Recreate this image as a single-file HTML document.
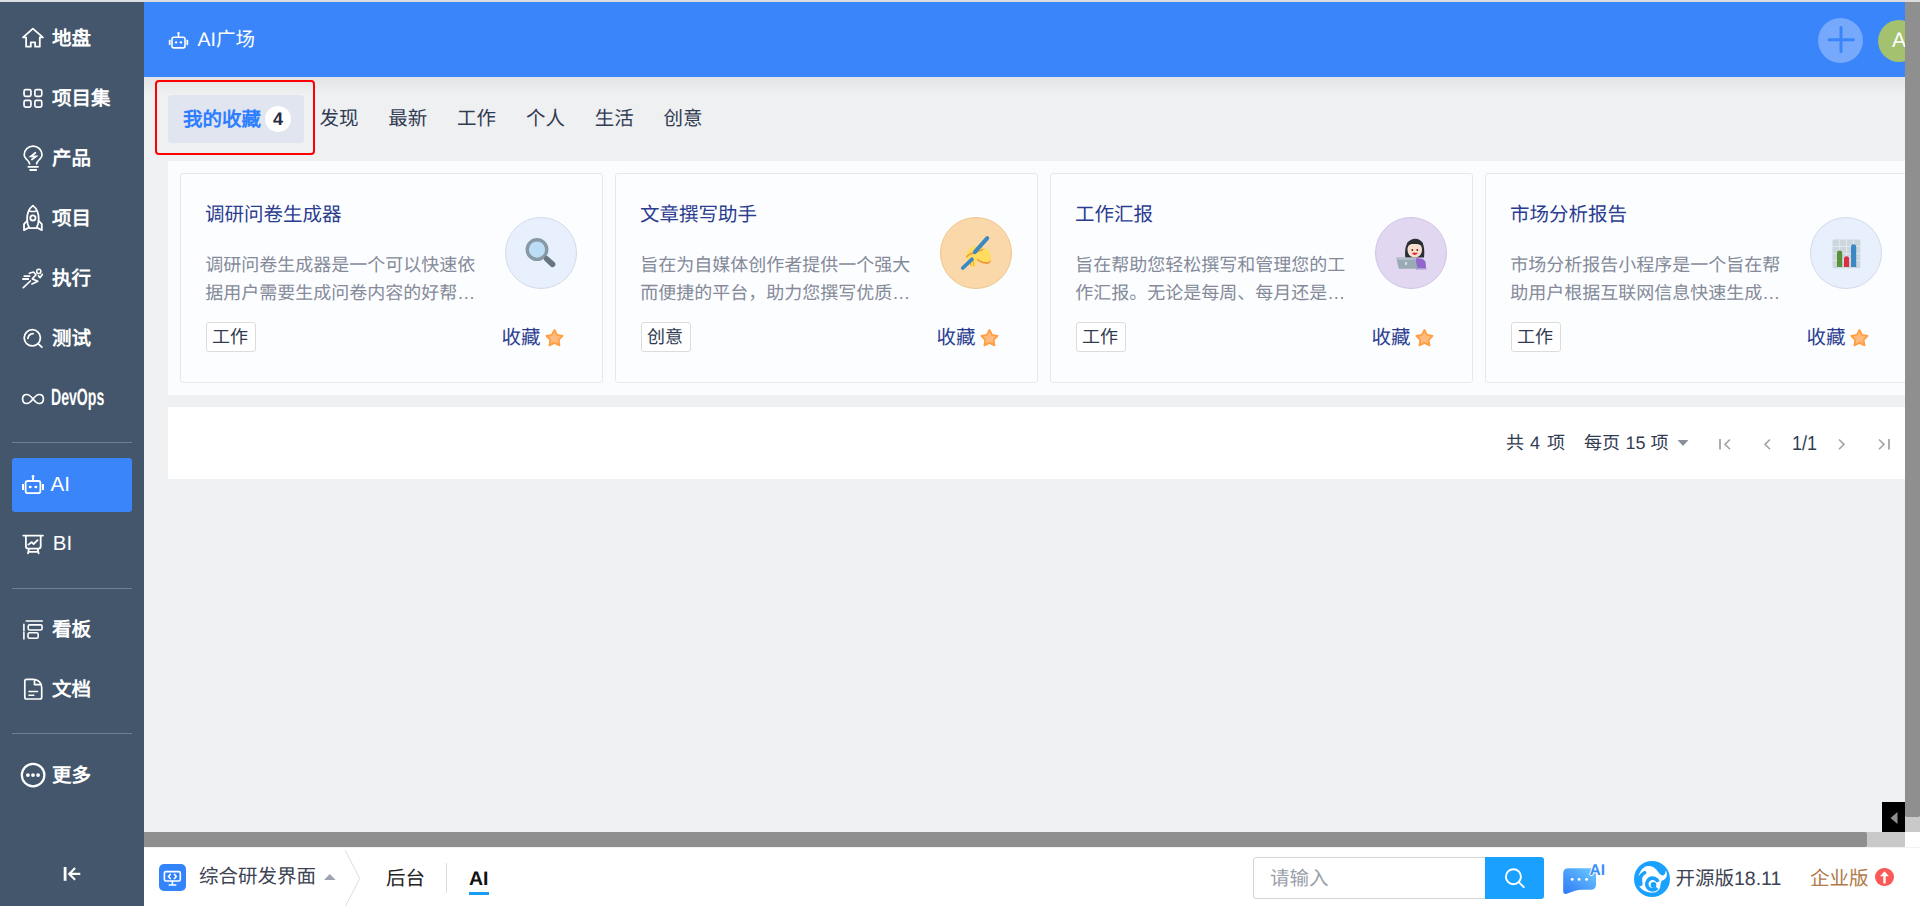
<!DOCTYPE html>
<html lang="zh-CN"><head><meta charset="utf-8">
<style>
*{box-sizing:border-box;margin:0;padding:0}
html,body{width:1920px;height:906px;overflow:hidden;text-rendering:geometricPrecision;background:#eff0f2;font-family:"Liberation Sans",sans-serif;color:#313c52}
.abs{position:absolute}
svg{position:absolute;overflow:visible}
#topstrip{left:0;top:0;width:1920px;height:2px;background:#dcdde1}
#side{left:0;top:2px;width:144px;height:904px;background:#43566b}
.nt{position:absolute;left:52px;color:#fff;font-size:19.5px;font-weight:600;line-height:24px;white-space:nowrap}
.sep{position:absolute;left:12px;width:120px;height:1px;background:#6f7f91}
#header{left:144px;top:2px;width:1761px;height:75px;background:#3a85f9}
#tabs{left:144px;top:77px;width:1761px;height:84px;background:#eff0f2}
.tab{position:absolute;top:107px;font-size:19.5px;line-height:24px;color:#313c52;white-space:nowrap}
#cards{left:168px;top:161px;width:1737px;height:234px;background:#fbfcfe;overflow:hidden}
.card{position:absolute;top:12px;width:423px;height:210px;border:1px solid #e7e8ea;border-radius:3px;background:#fcfdff}
.ttl{position:absolute;left:24px;top:28.5px;font-size:19.5px;color:#2a3c8f;line-height:24px;white-space:nowrap}
.desc{position:absolute;left:24.2px;top:77px;font-size:18px;line-height:28px;color:#848a99;white-space:nowrap}
.ico{position:absolute;left:324px;top:43px;width:72px;height:72px;border-radius:50%;border:1.5px solid #d3d9e8;background:#e9f0fd}
.tag{position:absolute;left:25px;top:148px;width:50px;height:30px;padding-right:2px;border:1px solid #dcdcdc;border-radius:3px;font-size:18px;line-height:28px;text-align:center;color:#313c52;background:#fff}
.fav{position:absolute;left:320.5px;top:152px;font-size:19.5px;line-height:24px;color:#2a3c8f;white-space:nowrap}
#pager{left:168px;top:407px;width:1737px;height:72px;background:#fff}
.pg{position:absolute;top:431px;font-size:18px;line-height:24px;color:#313c52;white-space:nowrap}
#vscroll{left:1905px;top:2px;width:15px;height:830px;background:#c9c9c9}
#hscroll{left:144px;top:832px;width:1761px;height:15px;background:#c9c9c9}
#bottom{left:144px;top:847px;width:1776px;height:59px;background:#fff;border-top:1px solid #f0f2f6}
.bt{position:absolute;font-size:19.5px;line-height:24px;white-space:nowrap}
</style></head><body>
<div class="abs" id="topstrip"></div>
<div class="abs" id="side"></div>
<!-- sidebar items -->
<svg style="left:0;top:0" width="144" height="906" viewBox="0 0 144 906" fill="none" stroke="#fff" stroke-width="1.7" stroke-linejoin="round" stroke-linecap="round">
  <!-- house -->
  <path d="M23 37.4 L32.9 28.6 L42.9 37.4 H39.8 V46.7 H35.1 V42.3 H30.8 V46.7 H26.1 V37.4 Z" stroke-width="1.8"/>
  <!-- grid -->
  <rect x="24.05" y="89.6" width="6.9" height="6.7" rx="1.6"/><rect x="34.85" y="89.6" width="6.9" height="6.7" rx="1.6"/>
  <rect x="24.05" y="100.4" width="6.9" height="6.8" rx="1.6"/><rect x="34.85" y="100.4" width="6.9" height="6.8" rx="1.6"/>
  <!-- bulb -->
  <path d="M29.6 163.8 C29.3 161.8 27.8 160.5 26.4 159.1 C24.8 157.5 24.2 155.8 24.2 155 A8.9 8.9 0 0 1 42 155 C42 155.8 41.4 157.5 39.8 159.1 C38.4 160.5 36.9 161.8 36.6 163.8"/>
  <path d="M28.3 166.8 H38 M30.2 170 H36.2" stroke-width="1.8"/>
  <path d="M35.4 152.8 L31 156.4 H36 L31.9 159.5" stroke-width="1.8" stroke-linejoin="miter"/>
  <!-- rocket -->
  <path d="M32.9 205.6 C29 208.5 27.1 213 27.1 219 C27.1 222.5 28 226 29.5 228.2 H36.3 C37.8 226 38.7 222.5 38.7 219 C38.7 213 36.8 208.5 32.9 205.6 Z" stroke-width="1.8"/>
  <circle cx="32.9" cy="217.9" r="2.6" stroke-width="1.8"/>
  <path d="M29.7 210.9 Q32.9 212 36.1 210.9" stroke-width="1.6"/>
  <path d="M26.9 221 L24 224.2 V230.2 L28.7 227.6 M38.9 221 L41.8 224.2 V230.2 L37.1 227.6" stroke-width="1.8"/>
  <!-- run -->
  <circle cx="38.8" cy="271.4" r="2.1" stroke-width="1.6"/>
  <path d="M23.3 287.6 L30.4 281 M29.3 273.3 L33.5 272 L36 274.8 L32.3 278.9 L37.8 281.2 L32 284 M38.4 275.9 L40.1 277.6 L42.3 274.4" stroke-width="1.7"/>
  <path d="M23.6 276.1 H30.3 M22.3 279 H29" stroke-width="1.8" stroke-linecap="butt"/>
  <!-- test -->
  <circle cx="32.3" cy="337.8" r="8.1" stroke-width="1.8"/>
  <path d="M38.3 343.8 L41.9 347.2" stroke-width="1.8"/>
  <path d="M27.9 338.3 C28.3 335.8 30.5 333.8 33.1 333.6" stroke-width="1.8"/>
  <!-- infinity -->
  <path d="M33 399 C30.5 395.8 28.8 394.5 26.8 394.5 C24.2 394.5 22.6 396.5 22.6 399 C22.6 401.5 24.2 403.5 26.8 403.5 C28.8 403.5 30.5 402.2 33 399 C35.5 395.8 37.2 394.5 39.2 394.5 C41.8 394.5 43.4 396.5 43.4 399 C43.4 401.5 41.8 403.5 39.2 403.5 C37.2 403.5 35.5 402.2 33 399 Z"/>
  <!-- BI board -->
  <path d="M23.3 535.6 H43 M25.9 535.6 V546.3 Q25.9 548.6 28.2 548.6 H38.4 Q40.7 548.6 40.7 546.3 V535.6 M28.9 549 L28 553.4 M37.7 549 L38.6 553.4 M28.4 551.8 H38.2" stroke-width="1.8"/>
  <path d="M28.4 544.6 L31.6 542.2 L33.6 544 L37.6 540.2" stroke-width="1.8"/>
  <!-- kanban -->
  <path d="M26.3 621 H42.3 M23.9 624.3 V630.7 M23.9 632.3 V639" stroke-width="1.6"/><rect x="28.2" y="624.9" width="13.9" height="5.1" rx="1.6" stroke-width="1.6"/><rect x="28" y="632.8" width="10.2" height="5.5" rx="1.6" stroke-width="1.6"/>
  <!-- doc -->
  <path d="M26.5 679.3 H33.5 C38 679.3 41.7 683 41.7 687.5 V697.3 Q41.7 699 40 699 H26.5 Q24.8 699 24.8 697.3 V681 Q24.8 679.3 26.5 679.3 Z M34.5 679.8 V684.6 H41.2"/>
  <path d="M29 691.5 H37.5 M29 695.2 H33.8" stroke-width="1.6"/>
  <!-- more -->
  <circle cx="33.1" cy="775.1" r="11.3" stroke-width="2.2"/>
  <circle cx="27.9" cy="775.1" r="1.9" fill="#fff" stroke="none"/><circle cx="33" cy="775.1" r="1.9" fill="#fff" stroke="none"/><circle cx="38.1" cy="775.1" r="1.9" fill="#fff" stroke="none"/>
  <!-- collapse -->
  <path d="M65.1 867 V880.8" stroke-width="2.8" stroke-linecap="butt"/>
  <path d="M80.3 873.9 H69 M75.1 868 L69.2 873.9 L75.1 879.8" stroke-width="2.1" stroke-linecap="butt" stroke-linejoin="miter"/>
</svg>
<div class="nt" style="top:27px">地盘</div>
<div class="nt" style="top:87px">项目集</div>
<div class="nt" style="top:147px">产品</div>
<div class="nt" style="top:207px">项目</div>
<div class="nt" style="top:267px">执行</div>
<div class="nt" style="top:327px">测试</div>
<div class="nt" style="top:382.7px;left:51px;transform:scaleX(0.6);transform-origin:left;font-size:23.5px;line-height:28px">DevOps</div>
<div class="sep" style="top:442px"></div>
<div class="abs" style="left:12px;top:458px;width:120px;height:54px;background:#3a85f9;border-radius:3px"></div>
<svg style="left:0;top:0" width="144" height="906" fill="none" stroke="#fff" stroke-width="1.8" stroke-linejoin="round" stroke-linecap="round"><g transform="translate(33,487)"><rect x="-7.4" y="-6" width="14.8" height="12.2" rx="2.2"/><path d="M0 -6 V-10"/><circle cx="0" cy="-10.6" r="1.4" fill="#fff" stroke="none"/>
<rect x="-11" y="-3" width="2" height="6" fill="#fff" stroke="none"/><rect x="9" y="-3" width="2" height="6" fill="#fff" stroke="none"/>
<ellipse cx="-2.8" cy="0" rx="1.5" ry="1.3" fill="#fff" stroke="none"/><ellipse cx="2.8" cy="0" rx="1.5" ry="1.3" fill="#fff" stroke="none"/></g></svg>
<div class="nt" style="top:472.8px;left:50.5px;font-weight:normal;font-size:20.5px">AI</div>
<div class="nt" style="top:532.3px;font-weight:normal;left:52.8px;font-size:20.5px">BI</div>
<div class="sep" style="top:587.5px;height:1.5px"></div>
<div class="nt" style="top:618px">看板</div>
<div class="nt" style="top:678px">文档</div>
<div class="sep" style="top:733px"></div>
<div class="nt" style="top:764px">更多</div>

<!-- header -->
<div class="abs" id="header"></div>
<svg style="left:0;top:0" width="300" height="80" fill="none" stroke="#fff" stroke-width="1.8" stroke-linejoin="round" stroke-linecap="round"><g transform="translate(178.5,42.45) scale(0.88)"><rect x="-7.4" y="-6" width="14.8" height="12.2" rx="2.2"/><path d="M0 -6 V-10"/><circle cx="0" cy="-10.6" r="1.4" fill="#fff" stroke="none"/>
<rect x="-11" y="-3" width="2" height="6" fill="#fff" stroke="none"/><rect x="9" y="-3" width="2" height="6" fill="#fff" stroke="none"/>
<ellipse cx="-2.8" cy="0" rx="1.5" ry="1.3" fill="#fff" stroke="none"/><ellipse cx="2.8" cy="0" rx="1.5" ry="1.3" fill="#fff" stroke="none"/></g></svg>
<div class="abs" style="left:197.5px;top:26px;font-size:19.5px;line-height:28px;color:#fff;white-space:nowrap">AI广场</div>
<div class="abs" style="left:1818px;top:18px;width:45px;height:45px;border-radius:50%;background:#76a8fb"></div>
<svg style="left:0;top:0" width="1920" height="80" stroke="#3a85f9" stroke-width="3" stroke-linecap="round"><path d="M1841 27.5 V51.5 M1829 39.7 H1853.5"/></svg>
<div class="abs" style="left:1878px;top:20px;width:42px;height:42px;border-radius:50%;background:#a3c16f;color:#fff;font-size:21px;line-height:42px;text-align:center">A</div>

<!-- tabs -->
<div class="abs" style="left:144px;top:77px;width:1761px;height:18px;background:linear-gradient(rgba(0,0,0,0.05),rgba(0,0,0,0))"></div>
<div class="abs" style="left:155px;top:80px;width:160px;height:75px;border:2px solid #ff0000;border-radius:4px"></div>
<div class="abs" style="left:168px;top:95px;width:136px;height:48px;background:#e1e5ef;border-radius:4px"></div>
<div class="tab" style="left:183px;top:108px;color:#2e7fff;font-weight:bold">我的收藏</div>
<div class="abs" style="left:265px;top:106px;width:26px;height:26px;border-radius:50%;background:#fff;color:#222b3f;font-size:18px;line-height:26px;text-align:center;font-weight:bold">4</div>
<div class="tab" style="left:319.5px">发现</div>
<div class="tab" style="left:388.3px">最新</div>
<div class="tab" style="left:457.1px">工作</div>
<div class="tab" style="left:525.9px">个人</div>
<div class="tab" style="left:594.7px">生活</div>
<div class="tab" style="left:663.5px">创意</div>

<!-- cards -->
<div class="abs" id="cards">
  <div class="card" style="left:12px">
    <div class="ttl">调研问卷生成器</div>
    <div class="desc">调研问卷生成器是一个可以快速依<br>据用户需要生成问卷内容的好帮…</div>
    <div class="ico"><svg style="left:-1.5px;top:-1.5px" width="72" height="72" viewBox="0 0 72 72"><circle cx="32" cy="32.6" r="9.8" fill="#bbddf5" stroke="#8899a6" stroke-width="3.4"/>
<path d="M41.8 42 L47.6 47.4" stroke="#66757f" stroke-width="5.6" stroke-linecap="round"/></svg></div>
    <div class="tag">工作</div>
    <div class="fav">收藏</div><svg class="star" style="left:364px;top:155px" width="20" height="20" viewBox="0 0 20 20"><path d="M9.45 1.00 L12.05 5.92 L17.53 6.87 L13.65 10.87 L14.45 16.38 L9.45 13.92 L4.45 16.38 L5.25 10.87 L1.37 6.87 L6.85 5.92 Z" fill="#ffbb7f" stroke="#ff9f40" stroke-width="1.8" stroke-linejoin="round"/></svg>
  </div>
  <div class="card" style="left:447px">
    <div class="ttl">文章撰写助手</div>
    <div class="desc">旨在为自媒体创作者提供一个强大<br>而便捷的平台，助力您撰写优质…</div>
    <div class="ico" style="background:#fad8a9;border-color:#efc690"><svg style="left:-1.5px;top:-1.5px" width="72" height="72" viewBox="0 0 72 72"><g transform="translate(-0.3,-1.6)"><path d="M26.3 40.5 C26.8 35.5 31 31.3 36 30.8 C40 30.4 43 31.8 46.5 33.5 C50.5 35.5 51.8 40 51.2 44 C50.7 47.5 47.5 48.8 44 48.3 C41 47.9 38.5 46.3 36.8 45.3 L35.8 50.3 C35.3 51.5 33.3 51.6 31.6 51 C29.6 50.2 28.6 47.3 28.4 44.5 C27 43.5 26.2 42 26.3 40.5 Z" fill="#ffdc5d"/>
<path d="M37.5 44.8 C40.5 47 43.5 48.3 46.8 48.5 C49.8 48.6 51.3 46.8 51.2 44.3 C50.5 46.3 48.3 47 45.3 46.6 C42.3 46.2 39.8 44.8 37.5 43.2 Z" fill="#ef9645"/>
<path d="M27 41.5 C29.5 38.5 33 37 37 36.8" stroke="#ef9645" stroke-width="1.4" fill="none" stroke-linecap="round"/>
<path d="M30.8 44.5 C30.5 46.5 30.6 48.5 31.3 50.3 M33.5 44.8 C33.3 46.8 33.5 48.8 34.2 50.6" stroke="#f4a940" stroke-width="1.1" fill="none"/>
<path d="M34.5 36.8 C37.5 36.2 40.5 35.6 43 34.3" stroke="#ef9645" stroke-width="1.4" fill="none" stroke-linecap="round"/>
</g><path d="M47.3 21.2 L34.8 35.2" stroke="#3b88c3" stroke-width="4" stroke-linecap="round"/>
<path d="M31.9 42.3 L22.8 51" stroke="#3b88c3" stroke-width="3.8" stroke-linecap="round"/>
<path d="M29.5 42.2 L32.5 41.8 L31 44.5 Z" fill="#3b88c3"/></svg></div>
    <div class="tag">创意</div>
    <div class="fav">收藏</div><svg class="star" style="left:364px;top:155px" width="20" height="20" viewBox="0 0 20 20"><path d="M9.45 1.00 L12.05 5.92 L17.53 6.87 L13.65 10.87 L14.45 16.38 L9.45 13.92 L4.45 16.38 L5.25 10.87 L1.37 6.87 L6.85 5.92 Z" fill="#ffbb7f" stroke="#ff9f40" stroke-width="1.8" stroke-linejoin="round"/></svg>
  </div>
  <div class="card" style="left:882px">
    <div class="ttl">工作汇报</div>
    <div class="desc">旨在帮助您轻松撰写和管理您的工<br>作汇报。无论是每周、每月还是…</div>
    <div class="ico" style="background:#e2d7f1;border-color:#d0c4e6"><svg style="left:-1.5px;top:-1.5px" width="72" height="72" viewBox="0 0 72 72"><path d="M30.3 40.5 C29.8 35 30 29.5 32.5 26 C34.5 23 37.5 21.8 40 21.8 C43.5 21.8 46.5 23.5 48 27 C49.5 30.5 49.5 36 49 40.5 Z" fill="#292f33"/>
<path d="M32.5 32.5 C32.5 28 35.5 26.5 39.8 26.5 C44 26.5 47 28 47 32.5 C47 37.5 44 40.5 39.8 40.5 C35.5 40.5 32.5 37.5 32.5 32.5 Z" fill="#f7dece"/>
<path d="M32 29.5 C34 27 37 26.8 39 27 C42 27.3 45 26.5 48 29.5 L48 26 C45 22 35 22 32 26 Z" fill="#292f33"/>
<circle cx="37.3" cy="33" r="0.9" fill="#662113"/><circle cx="42.3" cy="33" r="0.9" fill="#662113"/>
<path d="M37.8 36.3 Q39.8 38.2 41.8 36.3 Z" stroke="#df1f32" stroke-width="1.3" fill="#df1f32" stroke-linejoin="round"/>
<path d="M40.5 41.5 C44.5 40.8 49 41.5 50.5 45 L51.3 52.5 L41 52.5 Z" fill="#9266cc"/>
<path d="M21.3 40.6 H39.5 L43 51.8 H23.8 Z" fill="#99aab5"/>
<path d="M22.5 42 H39" stroke="#ccd6dd" stroke-width="1"/>
<ellipse cx="31" cy="46.5" rx="1.3" ry="2" fill="#ccd6dd"/>
<path d="M42 52 H51" stroke="#ccd6dd" stroke-width="1"/></svg></div>
    <div class="tag">工作</div>
    <div class="fav">收藏</div><svg class="star" style="left:364px;top:155px" width="20" height="20" viewBox="0 0 20 20"><path d="M9.45 1.00 L12.05 5.92 L17.53 6.87 L13.65 10.87 L14.45 16.38 L9.45 13.92 L4.45 16.38 L5.25 10.87 L1.37 6.87 L6.85 5.92 Z" fill="#ffbb7f" stroke="#ff9f40" stroke-width="1.8" stroke-linejoin="round"/></svg>
  </div>
  <div class="card" style="left:1317px">
    <div class="ttl">市场分析报告</div>
    <div class="desc">市场分析报告小程序是一个旨在帮<br>助用户根据互联网信息快速生成…</div>
    <div class="ico"><svg style="left:-1.5px;top:-1.5px" width="72" height="72" viewBox="0 0 72 72"><rect x="22.5" y="22.5" width="27.8" height="28.7" rx="1.5" fill="#ccd6dd"/>
<path d="M22.5 29.5 H50.3 M22.5 36.5 H50.3 M22.5 43.5 H50.3 M29.5 22.5 V51.2 M36.5 22.5 V51.2 M43.5 22.5 V51.2" stroke="#e1e8ed" stroke-width="1.2"/>
<path d="M27 50 V36 A2.6 2.6 0 0 1 32.2 36 V50 Z" fill="#5c913b"/>
<path d="M34 50 V41.8 A2.55 2.55 0 0 1 39.1 41.8 V50 Z" fill="#dd2e44"/>
<path d="M41 50 V29.9 A2.6 2.6 0 0 1 46.2 29.9 V50 Z" fill="#3b88c3"/></svg></div>
    <div class="tag">工作</div>
    <div class="fav">收藏</div><svg class="star" style="left:364px;top:155px" width="20" height="20" viewBox="0 0 20 20"><path d="M9.45 1.00 L12.05 5.92 L17.53 6.87 L13.65 10.87 L14.45 16.38 L9.45 13.92 L4.45 16.38 L5.25 10.87 L1.37 6.87 L6.85 5.92 Z" fill="#ffbb7f" stroke="#ff9f40" stroke-width="1.8" stroke-linejoin="round"/></svg>
  </div>
</div>

<!-- pager -->
<div class="abs" id="pager"></div>
<div class="pg" style="left:1506px">共</div><div class="pg" style="left:1530px">4</div><div class="pg" style="left:1547px">项</div>
<div class="pg" style="left:1584px">每页</div><div class="pg" style="left:1625.5px">15</div><div class="pg" style="left:1650.5px">项</div>
<svg style="left:0;top:0" width="1920" height="906" fill="none" stroke-linecap="butt" stroke-linejoin="miter">
<path d="M1677.5 440 H1688.5 L1683 446 Z" fill="#8b909c"/>
<path d="M1720 439 V449.5" stroke="#a3a3a3" stroke-width="1.8"/>
<path d="M1730 439.5 L1725 444.3 L1730 449.2" stroke="#a3a3a3" stroke-width="1.6"/>
<path d="M1770 439.5 L1765 444.3 L1770 449.2" stroke="#a3a3a3" stroke-width="1.6"/>
<path d="M1839 439.5 L1844 444.3 L1839 449.2" stroke="#a3a3a3" stroke-width="1.6"/>
<path d="M1879 439.5 L1884 444.3 L1879 449.2" stroke="#a3a3a3" stroke-width="1.6"/>
<path d="M1889 439 V449.5" stroke="#a3a3a3" stroke-width="1.8"/>
</svg>
<div class="pg" style="left:1791.5px;top:432px;font-size:20.5px;transform:scaleX(0.88);transform-origin:left">1/1</div>

<!-- scrollbars -->
<div class="abs" id="vscroll"></div><div class="abs" style="left:1905px;top:2px;width:15px;height:814.5px;background:#8f8f8f;border-radius:0 0 2px 2px"></div><div class="abs" style="left:1905px;top:832px;width:15px;height:15px;background:#fff"></div>
<div class="abs" id="hscroll"></div>
<div class="abs" style="left:144px;top:832px;width:1723px;height:15px;background:#8f8f8f;border-radius:0 2px 2px 0"></div>
<div class="abs" style="left:1882px;top:802px;width:23px;height:30px;background:#000"></div>

<!-- bottom -->
<div class="abs" id="bottom"></div>
<div class="abs" style="left:159px;top:864px;width:27px;height:27px;background:#3384fa;border-radius:5px"></div>
<div class="bt" style="left:199px;top:865px;color:#3c4353">综合研发界面</div>
<div class="bt" style="left:386px;top:867px;color:#222">后台</div>
<div class="abs" style="left:446px;top:863px;width:1px;height:30px;background:#ddd"></div>
<div class="bt" style="left:469px;top:866.5px;color:#111;font-weight:bold">AI</div>
<div class="abs" style="left:469px;top:892px;width:20px;height:3px;background:#1a9cf0"></div>
<div class="abs" style="left:1253px;top:857px;width:233px;height:42px;border:1px solid #d5d5d5;border-radius:3px 0 0 3px;background:#fff"></div>
<div class="bt" style="left:1270px;top:866.5px;color:#9aa0ab">请输入</div>
<div class="abs" style="left:1485px;top:857px;width:59px;height:42px;background:#1aa1ff;border-radius:0 3px 3px 0"></div>
<div class="abs" style="left:1634px;top:861px;width:36px;height:36px;border-radius:50%;background:#1aa1ff"></div>
<div class="bt" style="left:1675.5px;top:866.5px;color:#3c4353">开源版18.11</div>
<div class="bt" style="left:1810px;top:866.5px;color:#b07a4a">企业版</div>
<div class="abs" style="left:1875px;top:867.7px;width:18.8px;height:18.8px;border-radius:50%;background:#fb5858"></div>
<svg style="left:0;top:0" width="1920" height="906" fill="none">
<!-- monitor icon -->
<rect x="164.4" y="871.6" width="15.9" height="9.4" rx="1.5" stroke="#fff" stroke-width="1.6"/>
<path d="M172.4 881 V884.8 M169.2 885 H175.8" stroke="#fff" stroke-width="1.6" stroke-linecap="round"/>
<path d="M170.3 874.4 L168.5 876.5 L170.3 878.6 M174.5 874.4 L176.3 876.5 L174.5 878.6" stroke="#fff" stroke-width="1.6" stroke-linecap="round" stroke-linejoin="round"/>
<!-- caret up -->
<path d="M324 880 L329.8 874 L335.6 880 Z" fill="#9ea3b0"/>
<!-- chevron -->
<path d="M345 850 L359.7 878.5 L345.6 906" stroke="#dedede" stroke-width="1"/>
<!-- search icon -->
<circle cx="1513.4" cy="876.7" r="7.5" stroke="#fff" stroke-width="1.9"/>
<path d="M1518.8 882.2 L1523.8 887.2" stroke="#fff" stroke-width="1.9" stroke-linecap="round"/>
<!-- AI chat -->
<defs><linearGradient id="cg" x1="0" y1="1" x2="1" y2="0"><stop offset="0" stop-color="#2f78f6"/><stop offset="1" stop-color="#6ccbff"/></linearGradient></defs>
<path d="M1568.5 868.2 H1590.5 Q1596 868.2 1596 873.7 V884.3 Q1596 889.8 1590.5 889.8 H1581 Q1576 889.8 1567.5 893.6 Q1563.2 895.2 1563.2 891 V873.5 Q1563.2 868.2 1568.5 868.2 Z" fill="url(#cg)"/>
<circle cx="1572.2" cy="879.4" r="1.45" fill="#fff"/><circle cx="1579.1" cy="879.4" r="1.45" fill="#fff"/><circle cx="1586.6" cy="879.4" r="1.45" fill="#fff"/>
<!-- logo swirl -->
<g transform="translate(1634.2,860.8)">
<path d="M4.2 15.7 C6 9.5 9.5 5.8 13.4 5.3 C17 4.9 20 6.3 22.3 9 C24.5 11.8 25.8 14.2 28.3 14.6 C30.3 14.9 31.3 12.5 31.5 9.7 C33 11.5 33 14.5 32.2 16.2 C31 18.5 29.5 19.3 27.5 20 C26.5 22 26.2 24.5 25.9 26.9 C24.5 30 22 31.6 19.5 31.8 C16.5 32 13.5 31.8 10.5 30.2 C8 29 6.2 27.2 5 25.3 C7.2 25.5 8.6 24.8 8.4 22.5 C8.1 20.2 7.6 18.5 8.4 16.3 C9.3 14.2 11.8 13.5 12.2 12.2 C12.5 10.8 11 9.8 9.6 10.5 C7.4 11.6 5.6 13.6 4.2 15.7 Z" fill="#fff"/>
<path d="M23.94 21.18 A5.9 5.9 0 1 0 22.92 26.99" stroke="#1aa1ff" stroke-width="3.6" fill="none"/><circle cx="19.3" cy="24.2" r="2.9" fill="#1aa1ff"/>
</g>
<!-- red arrow -->
<path d="M1880.1 876.2 L1884.5 871.3 L1888.9 876.2 Z" fill="#fff"/><path d="M1884.5 875 V882.4" stroke="#fff" stroke-width="2.4" stroke-linecap="round"/>
<!-- toggle triangle -->
<path d="M1890.5 818 L1897.5 812.1 V823.9 Z" fill="#8f8f8f"/>
</svg>
<div class="abs" style="left:1589.5px;top:861.5px;font-size:15.5px;line-height:18px;font-weight:bold;color:#3d8ef8;font-style:normal;text-shadow:-1px 0 #fff,1px 0 #fff,0 -1px #fff,0 1px #fff">AI</div>
</body></html>
